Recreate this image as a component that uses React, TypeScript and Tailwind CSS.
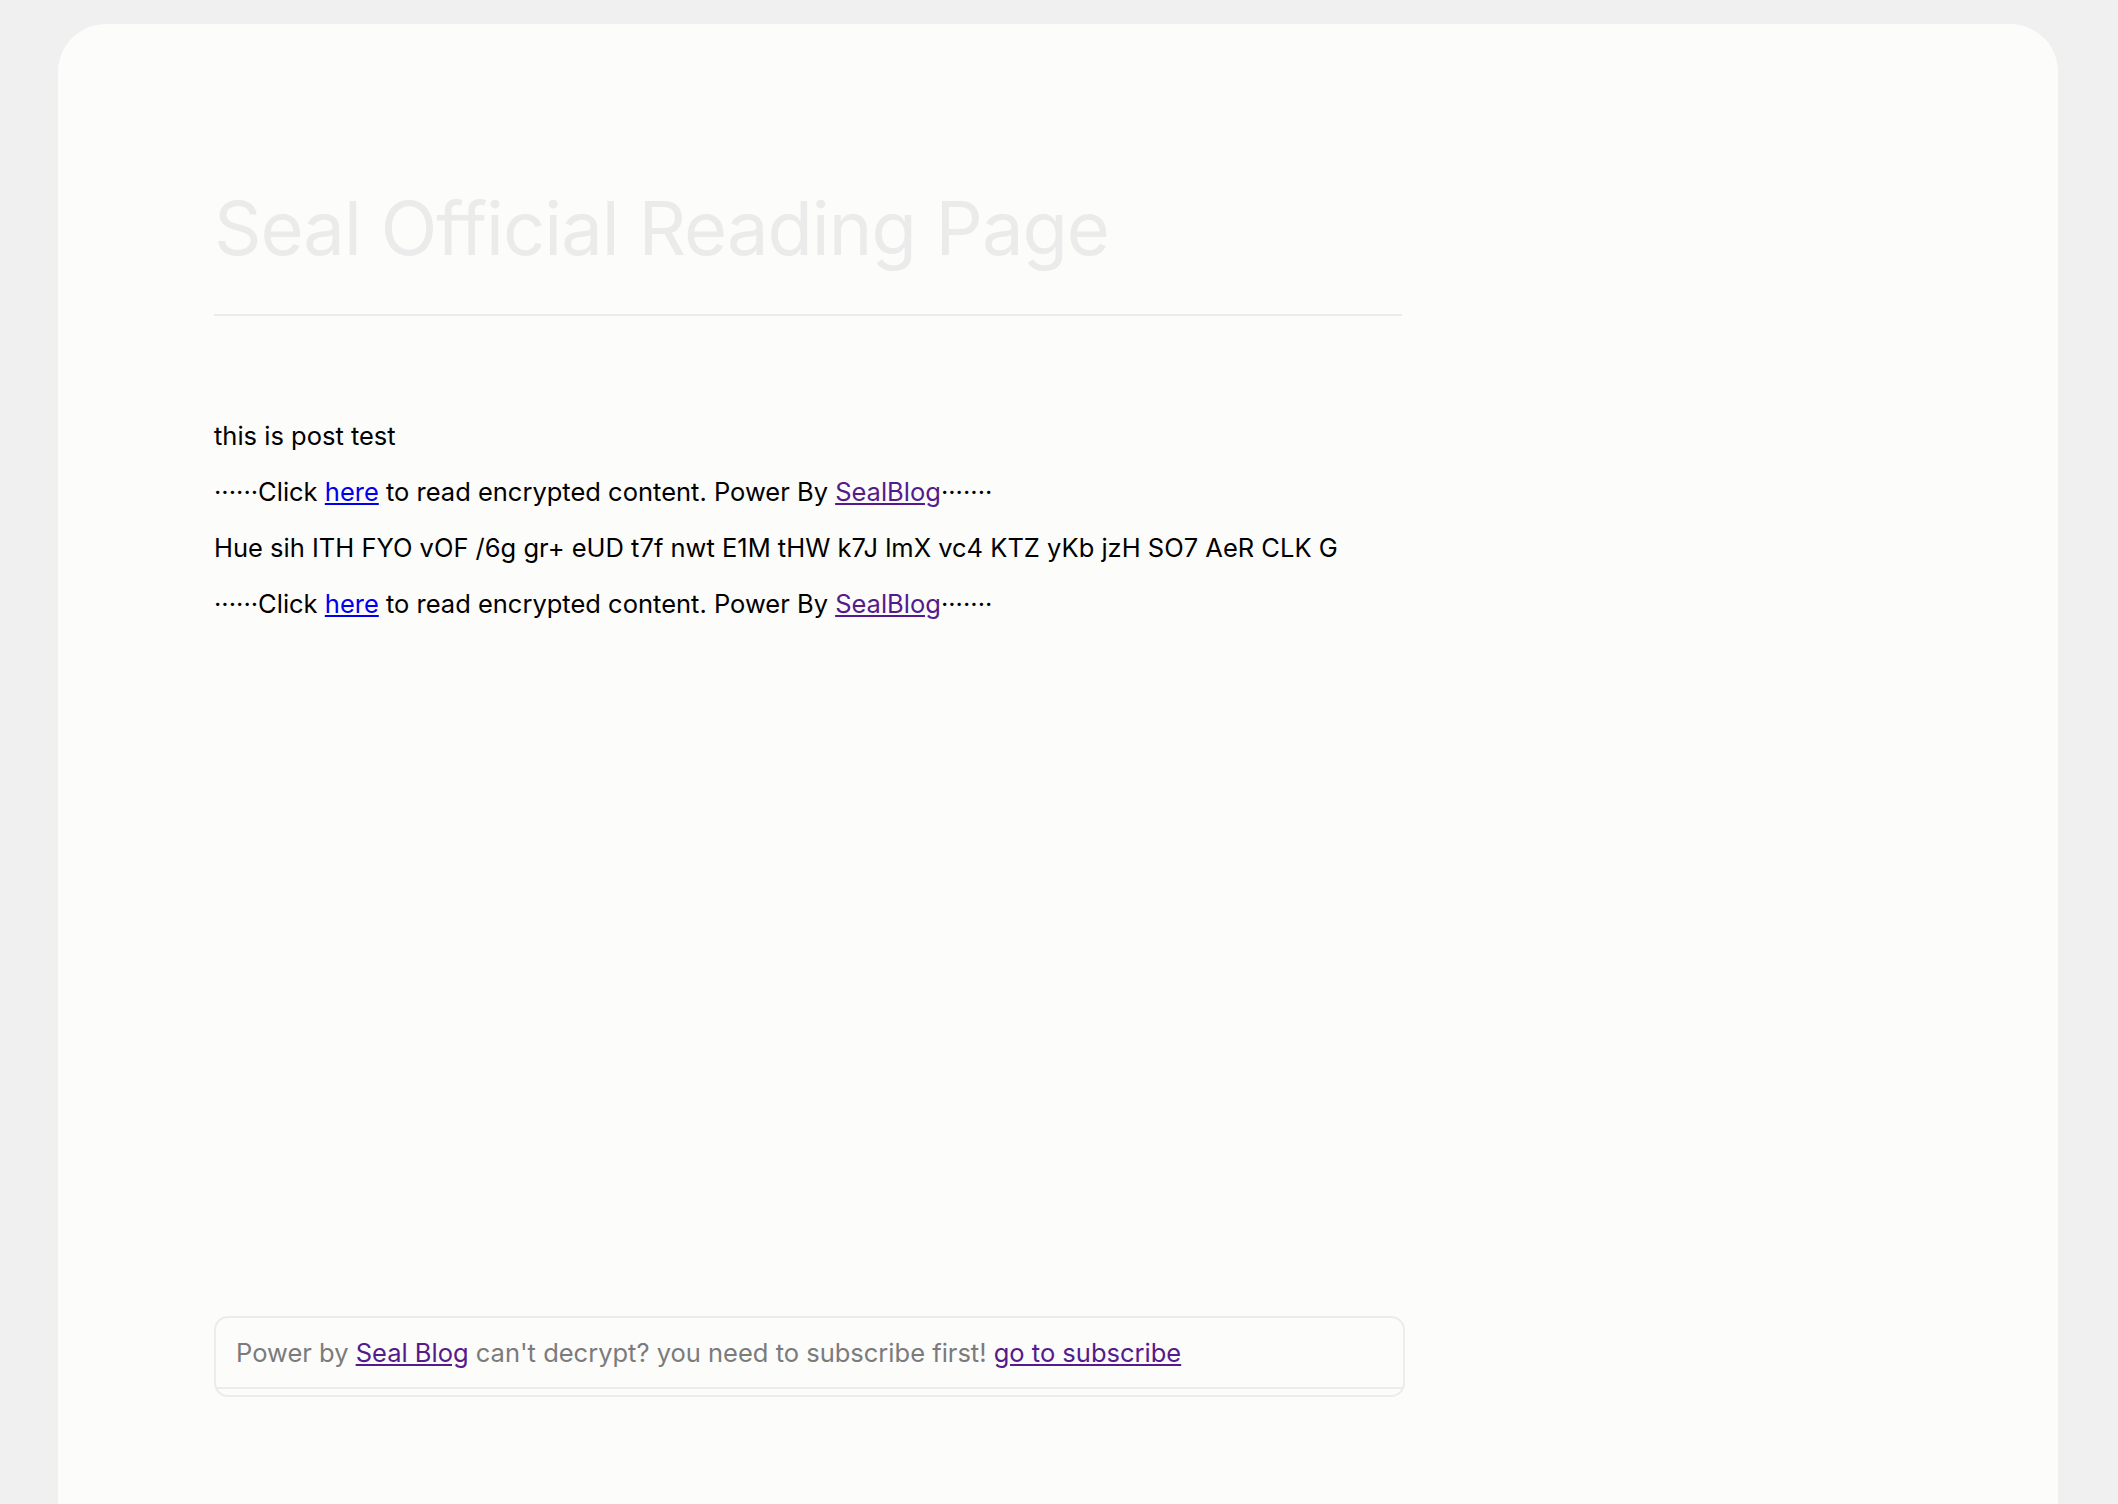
export default function App() {
  return (
    <div className="min-h-screen bg-[#f0f0f0] pt-[24px] pl-[58px] pr-[60px] font-['Inter',_'Noto_Sans',_sans-serif]">
      <main className="min-h-[1480px] rounded-t-[48px] bg-[#fcfcfb] pl-[156px] pt-[156px]">
        <div className="w-[1190px]">
          {/* Title */}
          <h1 className="text-[74px] leading-[96px] font-normal tracking-[-1px] text-[#ebebeb]">
            Seal Official Reading Page
          </h1>
          <div className="mt-[38px] h-[2px] w-[1188px] bg-[#ececec]"></div>

          {/* Post body */}
          <div className="mt-[92px] text-[25.5px] leading-[56px] text-black">
            <p>this is post test</p>
            <p>
              ······Click{" "}
              <a href="#" className="text-[#0000ee] underline">
                here
              </a>{" "}
              to read encrypted content. Power By{" "}
              <a href="#" className="text-[#551a8b] underline">
                SealBlog
              </a>
              ·······
            </p>
            <p>
              Hue sih ITH FYO vOF /6g gr+ eUD t7f nwt E1M tHW k7J lmX vc4 KTZ yKb jzH SO7 AeR CLK G
            </p>
            <p>
              ······Click{" "}
              <a href="#" className="text-[#0000ee] underline">
                here
              </a>{" "}
              to read encrypted content. Power By{" "}
              <a href="#" className="text-[#551a8b] underline">
                SealBlog
              </a>
              ·······
            </p>
          </div>

          {/* Subscribe notice */}
          <div className="mt-[684px] w-[1191px] rounded-[14px] border-2 border-[#ececec] pb-[6px]">
            <div className="border-b-2 border-[#ececec] px-[20px] pt-[17px] pb-[16px] text-[25.5px] leading-[36px] text-[#7b7b7b]">
              Power by{" "}
              <a href="#" className="text-[#551a8b] underline">
                Seal Blog
              </a>{" "}
              can't decrypt? you need to subscribe first!{" "}
              <a href="#" className="text-[#551a8b] underline">
                go to subscribe
              </a>
            </div>
          </div>
        </div>
      </main>
    </div>
  );
}
